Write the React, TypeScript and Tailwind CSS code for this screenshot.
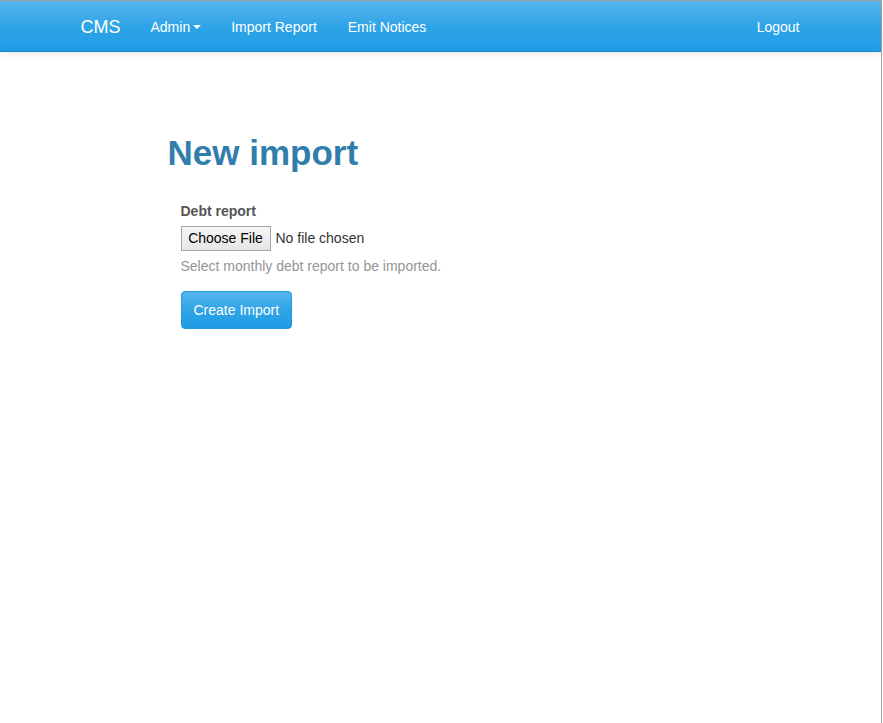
import React from "react";

const navLinks = ["Import Report", "Emit Notices"];

const Navbar = () => {
  return (
    <div className="h-[51px] border-b border-[#178acc] bg-gradient-to-b from-[#54b4eb] via-[#2fa4e7] to-[#1d9ce5] shadow-[0_1px_10px_rgba(0,0,0,0.1)]">
      <div className="mx-auto flex w-[750px] flex-row items-center justify-between px-[15px] pt-[1px]">
        <div className="flex flex-row items-center">
          <div className="py-[15px] pr-[15px] text-[18px] leading-[20px] text-white [text-shadow:0_1px_0_rgba(0,0,0,0.05)]">
            CMS
          </div>
          <div className="flex flex-row items-center px-[15px] py-[15px] text-[14px] leading-[20px] text-white">
            Admin
            <span className="ml-[3px] inline-block h-0 w-0 border-x-[4px] border-t-[4px] border-x-transparent border-t-white" />
          </div>
          <div className="py-[15px] pl-[15px] pr-[16px] text-[14px] leading-[20px] text-white">
            {navLinks[0]}
          </div>
          <div className="px-[15px] py-[15px] text-[14px] leading-[20px] text-white">
            {navLinks[1]}
          </div>
        </div>
        <div className="py-[15px] pl-[15px] pr-[1px] text-[14px] leading-[20px] text-white">
          Logout
        </div>
      </div>
    </div>
  );
};

const App = () => {
  return (
    <div className="min-h-[723px] w-[882px] border-r border-t border-[#a8a8a8] bg-white font-['Liberation_Sans',Arial,sans-serif] text-[14px] text-[#555]">
      <Navbar />
      <div className="mx-auto w-[750px] px-[15px] pt-[81px]">
        <h1 className="pl-[87px] text-[35px] font-bold leading-[40px] text-[#317eac]">
          New import
        </h1>
        <div className="pl-[100px] pt-[28px]">
          <div className="text-[14px] font-bold leading-[20px] text-[#555]">
            Debt report
          </div>
          <div className="mt-[5px] flex flex-row items-center gap-[5px]">
            <div className="flex h-[25px] w-[90px] items-center justify-center border border-[#a6a6a6] bg-gradient-to-b from-[#f6f6f6] to-[#e6e6e6] text-[14px] text-black">
              Choose File
            </div>
            <span className="text-[14px] text-[#333]">No file chosen</span>
          </div>
          <div className="mt-[5px] text-[14px] leading-[20px] text-[#959595]">
            Select monthly debt report to be imported.
          </div>
          <button className="mt-[15px] h-[38px] rounded-[4px] border border-[#1f9ae0] bg-gradient-to-b from-[#54b4eb] via-[#2fa4e7] to-[#1d9ce5] px-[12px] text-[14px] leading-[20px] text-white">
            Create Import
          </button>
        </div>
      </div>
    </div>
  );
};

export default App;
